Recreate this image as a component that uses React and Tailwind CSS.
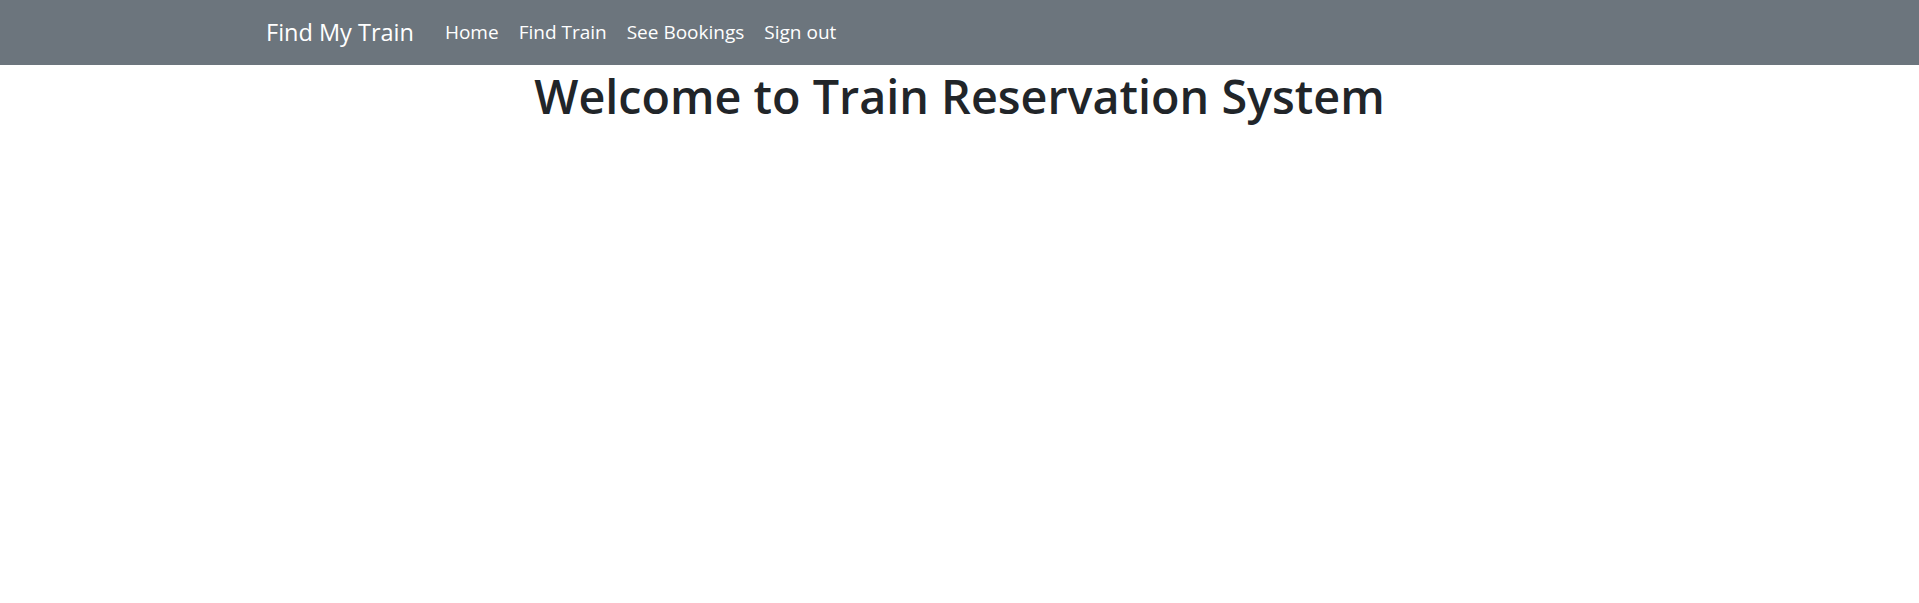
import React from 'react';

const links = ['Home', 'Find Train', 'See Bookings', 'Sign out'];

const App = () => {
  return (
    <div className="min-h-[603px] bg-white font-['Open_Sans',sans-serif]">
      <nav className="bg-[#6c757d] h-[65px]">
        <div className="w-[1425px] mx-auto px-[19px] h-full flex items-center">
          <a href="#" className="text-white text-[23.5px] mr-[21px] whitespace-nowrap">
            Find My Train
          </a>
          <ul className="flex items-center">
            {links.map((link) => (
              <li key={link}>
                <a href="#" className="block px-[10px] text-white text-[19px] whitespace-nowrap">
                  {link}
                </a>
              </li>
            ))}
          </ul>
        </div>
      </nav>

      <h1 className="mt-[3px] text-center text-[#212529] text-[46.7px] leading-[1.2] font-semibold">
        Welcome to Train Reservation System
      </h1>
    </div>
  );
};

export default App;
